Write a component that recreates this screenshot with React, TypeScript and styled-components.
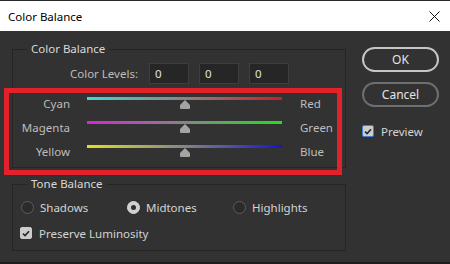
import React from "react";
import styled, { createGlobalStyle } from "styled-components";

const GlobalStyle = createGlobalStyle`
  html, body {
    margin: 0;
    padding: 0;
    background: #323232;
  }
  body {
    font-family: "Noto Sans", "Open Sans", sans-serif;
    font-size: 11.5px;
  }
`;

const Window = styled.div`
  width: 450px;
  height: 264px;
  box-sizing: border-box;
  display: flex;
  flex-direction: column;
  border-top: 1px solid #2b2b2b;
  border-bottom: 2px solid #1e1e1e;
  background: #323232;
`;

const TitleBar = styled.div`
  height: 30px;
  flex: none;
  display: flex;
  align-items: center;
  justify-content: space-between;
  padding: 0 10px 0 8px;
  background: #ffffff;
  color: #000;
  font-size: 11.5px;
`;

const Body = styled.div`
  position: relative;
  flex: 1;
  display: grid;
  grid-template-columns: 346px 1fr;
  align-items: start;
`;

const LeftCol = styled.div`
  display: flex;
  flex-direction: column;
  padding: 10px 0 0 12px;
`;

const Group = styled.fieldset<{ $gapTop?: number; $padBottom: number }>`
  margin: ${(p) => p.$gapTop ?? 0}px 0 0 0;
  padding: 0 0 ${(p) => p.$padBottom}px 0;
  min-width: 0;
  border: 1px solid #252525;
`;

const Legend = styled.legend`
  margin-left: 14px;
  padding: 0 4px;
  line-height: 16px;
  color: #d8d8d8;
`;

const LevelsRow = styled.div`
  display: flex;
  align-items: center;
  gap: 10px;
  margin-top: 6px;
`;

const LevelsLabel = styled.span`
  width: 125px;
  margin-right: 1px;
  text-align: right;
  color: #bdbdbd;
`;

const LevelInput = styled.div`
  width: 40px;
  height: 21px;
  box-sizing: border-box;
  padding-left: 5px;
  display: flex;
  align-items: center;
  background: #262626;
  border: 1px solid #3e3e3e;
  color: #e2e2e2;
`;

const Sliders = styled.div`
  margin-top: 7px;
`;

const SliderRow = styled.div`
  height: 24px;
  display: flex;
  align-items: center;
`;

const SideLabel = styled.span<{ $left?: boolean }>`
  color: #bdbdbd;
  white-space: nowrap;
  ${(p) =>
    p.$left
      ? "width: 57px; margin-right: 17px; display: flex; justify-content: flex-end;"
      : "margin-left: 18px;"}
`;

const Slider = styled.div`
  position: relative;
  width: 195px;
  height: 24px;
`;

const Track = styled.div<{ $from: string; $to: string }>`
  position: absolute;
  left: 0;
  right: 0;
  top: 6px;
  height: 3px;
  background: linear-gradient(to right, ${(p) => p.$from}, #858585, ${(p) => p.$to});
`;

const Thumb = styled.svg`
  position: absolute;
  left: 93px;
  top: 9px;
`;

const OptionsRow = styled.div`
  display: grid;
  grid-template-columns: repeat(3, 106px);
  height: 20px;
  margin-top: 5px;
  padding-left: 8px;
`;

const Option = styled.label`
  display: flex;
  align-items: center;
  gap: 6px;
  color: #d4d4d4;
`;

const Radio = styled.span<{ $on?: boolean }>`
  width: 13px;
  height: 13px;
  box-sizing: border-box;
  border-radius: 50%;
  display: flex;
  align-items: center;
  justify-content: center;
  background: ${(p) => (p.$on ? "#cfcfcf" : "#2b2b2b")};
  border: 1px solid ${(p) => (p.$on ? "#d8d8d8" : "#5c5c5c")};
  &::after {
    content: "";
    width: 5px;
    height: 5px;
    border-radius: 50%;
    background: #2e2e2e;
    display: ${(p) => (p.$on ? "block" : "none")};
  }
`;

const CheckRow = styled.label<{ $indent: number; $gap: number; $top: number }>`
  display: flex;
  align-items: center;
  height: 20px;
  margin-top: ${(p) => p.$top}px;
  padding-left: ${(p) => p.$indent}px;
  gap: ${(p) => p.$gap}px;
  color: #d4d4d4;
`;

const CheckBox = styled.span<{ $focus?: boolean }>`
  width: 12px;
  height: 12px;
  box-sizing: border-box;
  border-radius: 2px;
  display: flex;
  align-items: center;
  justify-content: center;
  background: #cdcdcd;
  border: 1px solid ${(p) => (p.$focus ? "#3d7fd6" : "#cdcdcd")};
`;

const RightCol = styled.div`
  display: flex;
  flex-direction: column;
  gap: 10px;
  padding: 16px 0 0 16px;
`;

const Button = styled.button<{ $primary?: boolean }>`
  width: 77px;
  height: 25px;
  border-radius: 13px;
  background: transparent;
  border: 2px solid ${(p) => (p.$primary ? "#c6c6c6" : "#6f6f6f")};
  color: #e4e4e4;
  font-family: inherit;
  font-size: 12px;
  padding: 0;
`;

const Highlight = styled.div`
  position: absolute;
  left: 4px;
  top: 57px;
  width: 338px;
  height: 87px;
  box-sizing: border-box;
  border: 5px solid #e3212b;
  pointer-events: none;
`;

const Check = () => (
  <svg width="8" height="7" viewBox="0 0 8 7">
    <path d="M1 3.6 L3.1 5.6 L7 1.2" fill="none" stroke="#2a2a2a" strokeWidth="1.7" />
  </svg>
);

const CloseIcon = () => (
  <svg width="11" height="11" viewBox="0 0 11 11">
    <path d="M0.5 0.5 L10.5 10.5 M10.5 0.5 L0.5 10.5" stroke="#111" strokeWidth="1" />
  </svg>
);

const sliders = [
  { left: "Cyan", right: "Red", from: "#45d6d6", to: "#cc1e1e" },
  { left: "Magenta", right: "Green", from: "#d824d8", to: "#1ee01e" },
  { left: "Yellow", right: "Blue", from: "#e0e01e", to: "#1414d4" },
];

const tones = [
  { name: "Shadows", on: false },
  { name: "Midtones", on: true },
  { name: "Highlights", on: false },
];

export default function App() {
  return (
    <>
      <GlobalStyle />
      <Window>
        <TitleBar>
          <span>Color Balance</span>
          <CloseIcon />
        </TitleBar>
        <Body>
          <LeftCol>
            <Group $padBottom={4}>
              <Legend>Color Balance</Legend>
              <LevelsRow>
                <LevelsLabel>Color Levels:</LevelsLabel>
                <LevelInput>0</LevelInput>
                <LevelInput>0</LevelInput>
                <LevelInput>0</LevelInput>
              </LevelsRow>
              <Sliders>
                {sliders.map((s) => (
                  <SliderRow key={s.left}>
                    <SideLabel $left>{s.left}</SideLabel>
                    <Slider>
                      <Track $from={s.from} $to={s.to} />
                      <Thumb width="10" height="9" viewBox="0 0 10 9">
                        <path d="M5 0 L10 5 V8 Q10 9 9 9 H1 Q0 9 0 8 V5 Z" fill="#a4a4a4" />
                      </Thumb>
                    </Slider>
                    <SideLabel>{s.right}</SideLabel>
                  </SliderRow>
                ))}
              </Sliders>
            </Group>
            <Group $gapTop={8} $padBottom={7}>
              <Legend>Tone Balance</Legend>
              <OptionsRow>
                {tones.map((t) => (
                  <Option key={t.name}>
                    <Radio $on={t.on} />
                    {t.name}
                  </Option>
                ))}
              </OptionsRow>
              <CheckRow $indent={7} $gap={7} $top={6}>
                <CheckBox>
                  <Check />
                </CheckBox>
                Preserve Luminosity
              </CheckRow>
            </Group>
          </LeftCol>
          <RightCol>
            <Button $primary>OK</Button>
            <Button>Cancel</Button>
            <CheckRow $indent={0} $gap={7} $top={4}>
              <CheckBox $focus>
                <Check />
              </CheckBox>
              Preview
            </CheckRow>
          </RightCol>
          <Highlight />
        </Body>
      </Window>
    </>
  );
}
